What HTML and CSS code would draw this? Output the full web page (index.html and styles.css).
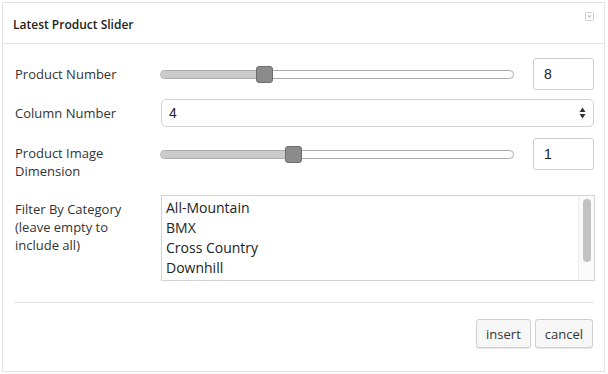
FILE: index.html
```html
<!DOCTYPE html>
<html>
<head>
<meta charset="utf-8">
<link rel="stylesheet" href="styles.css">
</head>
<body>
<div class="dialog">
  <div class="header">
    <span class="title">Latest Product Slider</span>
    <span class="toggle"><svg width="9" height="9" viewBox="0 0 9 9"><rect x="0.5" y="0.5" width="8" height="8" rx="1" fill="#fff" stroke="#cfcfcf"/><path d="M2.5 3.5h4l-2 2.5z" fill="#bdbdbd"/></svg></span>
  </div>
  <div class="content">
    <div class="row row-num">
      <label class="label">Product Number</label>
      <div class="slider"><div class="fill" style="width:104px"></div><div class="thumb" style="left:95px"></div></div>
      <input class="num" type="text" value="8">
    </div>
    <div class="row row-select">
      <label class="label">Column Number</label>
      <div class="select"><span>4</span><svg class="arrows" width="7" height="12" viewBox="0 0 7 12"><path d="M3.5 0.5L6.5 5H0.5z" fill="#333"/><path d="M3.5 11.5L6.5 7H0.5z" fill="#333"/></svg></div>
    </div>
    <div class="row row-num row-dim">
      <label class="label">Product Image<br>Dimension</label>
      <div class="slider"><div class="fill" style="width:133px"></div><div class="thumb" style="left:124px"></div></div>
      <input class="num" type="text" value="1">
    </div>
    <div class="row row-list">
      <label class="label">Filter By Category<br>(leave empty to<br>include all)</label>
      <div class="listbox">
        <div class="items">
          <div>All-Mountain</div>
          <div>BMX</div>
          <div>Cross Country</div>
          <div>Downhill</div>
        </div>
        <div class="scroll"><div class="bar"></div></div>
      </div>
    </div>
    <div class="sep"></div>
    <div class="buttons">
      <button class="btn">insert</button>
      <button class="btn">cancel</button>
    </div>
  </div>
</div>
</body>
</html>
```
FILE: styles.css
```css
* { box-sizing: border-box; }
html, body { margin: 0; padding: 0; background: #fff; }
body { font-family: "Open Sans", "DejaVu Sans", sans-serif; color: #333; width: 608px; height: 374px; overflow: hidden; }
.dialog { margin: 2px; width: 603px; height: 370px; border: 1px solid #e4e4e4; }
.header { height: 41px; border-bottom: 1px solid #e4e4e4; display: flex; align-items: flex-start; justify-content: space-between; padding: 0 10px 0 10px; }
.title { font-size: 12px; font-weight: 600; color: #222; margin-top: 13px; }
.toggle { margin-top: 9px; display: flex; }
.content { padding: 14px 9px 0 12px; }
.row { display: flex; align-items: center; }
.label { width: 145px; font-size: 13px; line-height: 18px; color: #333; flex: none; }
.slider { position: relative; width: 354px; height: 9px; border: 1px solid #aaa; border-radius: 5px; background: #fff; margin-right: 19px; }
.fill { position: absolute; left: 0; top: 0; bottom: 0; background: #cbcbcb; border-radius: 4px 0 0 4px; }
.thumb { position: absolute; top: -5px; width: 17px; height: 17px; background: #8b8b8b; border: 1px solid #6e6e6e; border-radius: 3px; }
.num { width: 61px; height: 32px; border: 1px solid #ccc; border-radius: 3px; padding: 0 0 0 10px; font-family: "Liberation Sans", Arial, sans-serif; font-size: 14px; color: #222; background: #fff; outline: none; }
.row-select { margin-top: 9px; }
.select { width: 433px; margin-left: 1px; height: 28px; border: 1px solid #d4d4d4; border-radius: 5px; display: flex; align-items: center; justify-content: space-between; padding: 0 7px 0 7px; font-family: "Liberation Sans", Arial, sans-serif; font-size: 14px; color: #222; }
.arrows { display: block; }
.row-dim { margin-top: 11px; height: 32px; }
.row-dim .label { align-self: flex-start; margin-top: 6px; margin-bottom: -10px; }
.row-list { margin-top: 25px; align-items: flex-start; }
.row-list .label { margin-top: 5px; }
.listbox { width: 434px; margin-left: 1px; height: 86px; border: 1px solid #d4d4d4; display: flex; justify-content: space-between; }
.items { padding: 2px 0 0 4px; font-size: 14px; line-height: 20px; color: #222; }
.scroll { width: 16px; border-left: 1px solid #ececec; padding: 3px 3px; background: #fafafa; }
.bar { width: 8px; height: 63px; background: #c2c2c2; border-radius: 4px; margin-left: 1px; }
.sep { height: 1px; background: #e0e0e0; margin: 21px 0 0 0; width: 578px; }
.buttons { display: flex; justify-content: flex-end; gap: 4px; margin-top: 16px; width: 578px; }
.btn { height: 29px; border: 1px solid #cfcfcf; border-radius: 3px; background: #f7f7f7; font-family: "Open Sans", sans-serif; font-size: 13px; color: #333; padding: 0 9px; box-shadow: 0 1px 0 #e8e8e8; }
```
